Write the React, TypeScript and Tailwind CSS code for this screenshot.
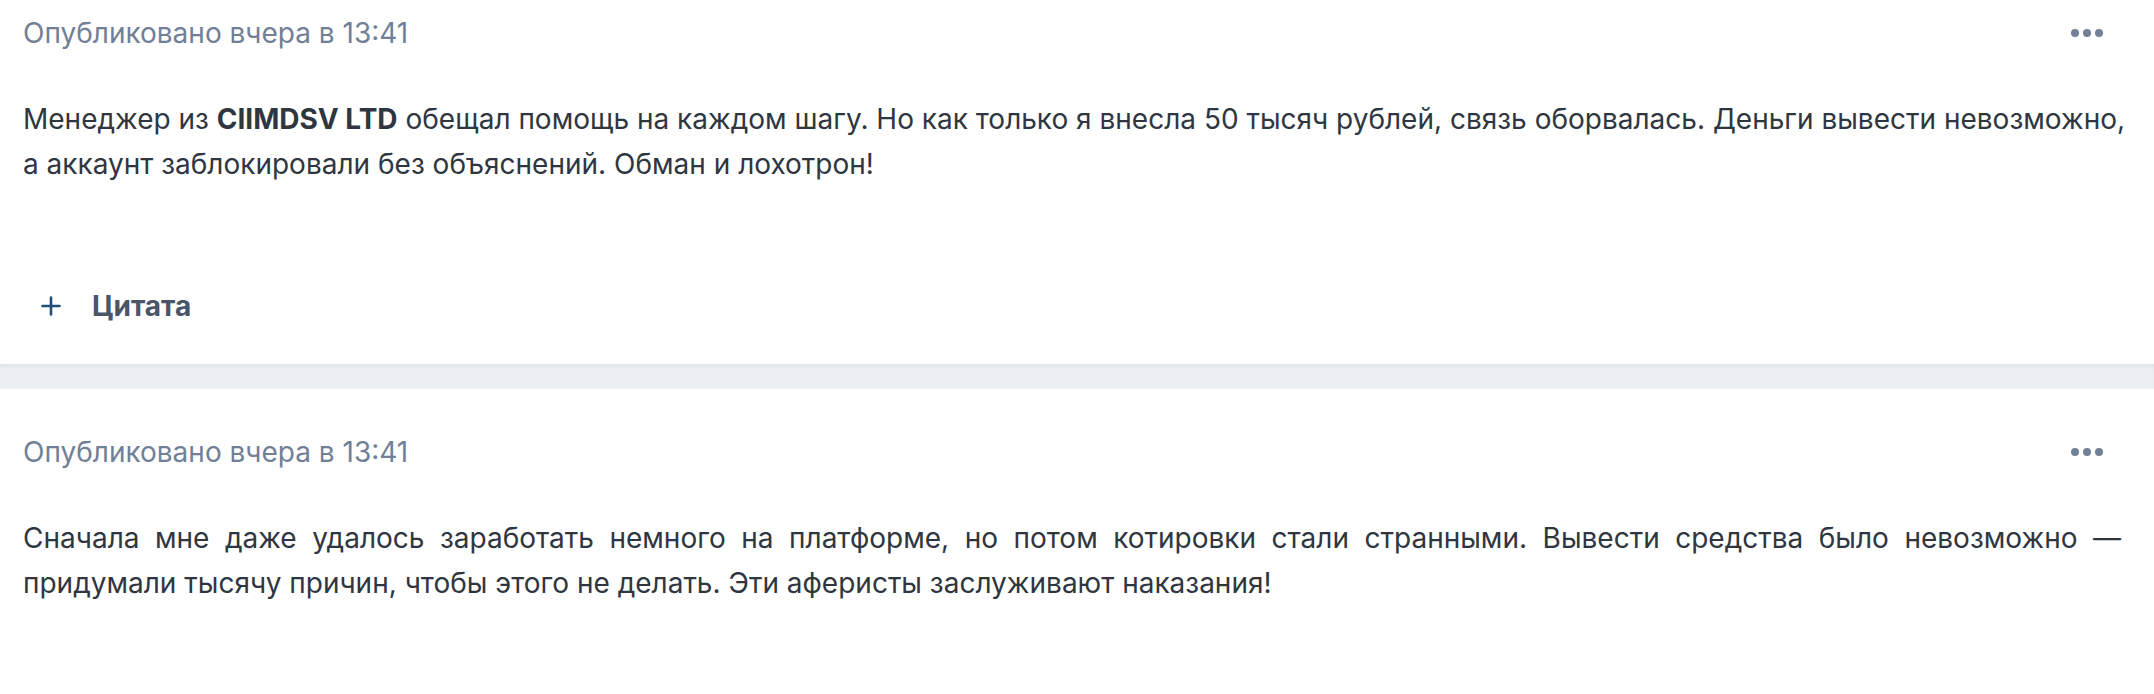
import React from "react";

function Dots() {
  return (
    <svg width="34" height="8" viewBox="0 0 34 8" className="mr-[16px] shrink-0">
      <circle cx="4" cy="4" r="4" fill="#718096" />
      <circle cx="16" cy="4" r="4" fill="#718096" />
      <circle cx="28" cy="4" r="4" fill="#718096" />
    </svg>
  );
}

function Plus() {
  return (
    <svg width="20" height="20" viewBox="0 0 20 20" className="shrink-0">
      <path d="M10 1.5V18.5M1.5 10H18.5" stroke="#1f4e79" strokeWidth="2.6" strokeLinecap="round" />
    </svg>
  );
}

function Comment({
  top,
  first,
  second,
}: {
  top: string;
  first: React.ReactNode;
  second: React.ReactNode;
}) {
  return (
    <div className={`bg-white pl-[23px] pr-[33px] ${top} pb-[40px]`}>
      <div className="flex items-center justify-between h-[36px]">
        <span className="text-[28px] leading-[36px] text-[#718096]">Опубликовано вчера в 13:41</span>
        <Dots />
      </div>
      <p className="mt-[46px] text-[28px] leading-[45px] text-[#2f3640]">
        <span className="block whitespace-nowrap text-justify [text-align-last:justify]">{first}</span>
        <span className="block">{second}</span>
      </p>
      <div className="mt-[101px] flex items-center h-[36px] pl-[18px] gap-[31px]">
        <Plus />
        <span className="text-[28px] leading-[36px] font-bold text-[#4a5568]">Цитата</span>
      </div>
    </div>
  );
}

export default function App() {
  return (
    <div
      className="h-[694px] w-full overflow-hidden bg-white"
      style={{ fontFamily: "Inter, 'Noto Sans', sans-serif" }}
    >
      <Comment
        top="pt-[15px]"
        first={
          <>
            Менеджер из <b className="font-bold">CIIMDSV LTD</b> обещал помощь на каждом шагу. Но как только я внесла 50
            тысяч рублей, связь оборвалась. Деньги вывести невозможно,
          </>
        }
        second="а аккаунт заблокировали без объяснений. Обман и лохотрон!"
      />
      <div className="h-[25px] bg-[#ebeef2] shadow-[inset_0_4px_4px_-2px_rgba(0,0,0,0.06)]" />
      <Comment
        top="pt-[45px]"
        first="Сначала мне даже удалось заработать немного на платформе, но потом котировки стали странными. Вывести средства было невозможно —"
        second="придумали тысячу причин, чтобы этого не делать. Эти аферисты заслуживают наказания!"
      />
    </div>
  );
}
